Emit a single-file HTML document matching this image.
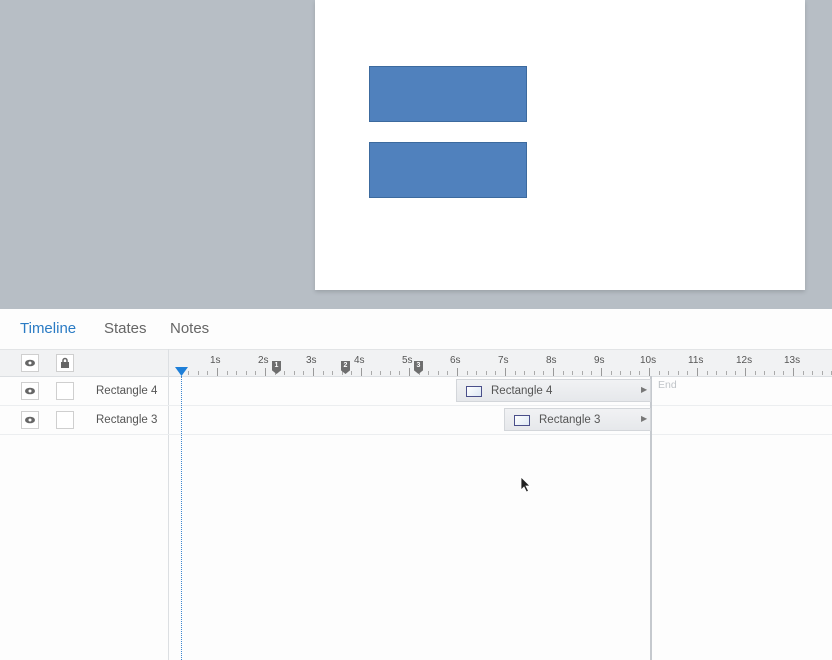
<!DOCTYPE html>
<html><head><style>
*{margin:0;padding:0;box-sizing:border-box}
body{width:832px;height:660px;position:relative;overflow:hidden;background:#fdfdfd;font-family:"Liberation Sans",sans-serif}
.a{position:absolute}
.lbl{font-size:11px;color:#555}
.tk{position:absolute;top:371px;width:1px;height:4px;background:#aaa}
.mj{top:368px;height:8px;background:#999}
.sec{position:absolute;top:355px;font-size:10px;color:#555}
.ib{position:absolute;width:18px;height:18px;border:1px solid #cfcfcf;background:#fff}
.mk{position:absolute;top:361px;width:9px;height:13px;background:#6e6e6e;clip-path:polygon(0 0,100% 0,100% 72%,50% 100%,0 72%);color:#fff;font-size:7px;text-align:center;line-height:10px;font-weight:bold}
.bar{position:absolute;height:23px;background:linear-gradient(#f1f2f4,#e6e8eb);border:1px solid #d3d6da;font-size:11.5px;color:#555}
</style></head><body>
<div class="a" style="left:0;top:0;width:832px;height:309px;background:#b7bec5"></div>
<div class="a" style="left:315px;top:0;width:490px;height:290px;background:#fff;box-shadow:0 2px 4px rgba(0,0,0,.15)"></div>
<div class="a" style="left:369px;top:66px;width:158px;height:56px;background:#5081bd;border:1px solid #3c6a9e"></div>
<div class="a" style="left:369px;top:142px;width:158px;height:56px;background:#5081bd;border:1px solid #3c6a9e"></div>

<div class="a" style="left:20px;top:320px;font-size:15px;color:#2a7bc4">Timeline</div>
<div class="a" style="left:104px;top:320px;font-size:15px;color:#666">States</div>
<div class="a" style="left:170px;top:320px;font-size:15px;color:#666">Notes</div>

<div class="a" style="left:0;top:349px;width:832px;height:28px;background:#f1f2f3;border-top:1px solid #e2e4e6;border-bottom:1px solid #dcdfe2"></div>
<div class="a" style="left:168px;top:349px;width:1px;height:311px;background:#dcdfe2"></div>
<div class="a" style="left:0;top:405px;width:832px;height:1px;background:#eceef0"></div>
<div class="a" style="left:0;top:434px;width:832px;height:1px;background:#eceef0"></div>

<div class="ib" style="left:21px;top:354px"></div>
<div class="ib" style="left:56px;top:354px"></div>
<div class="ib" style="left:21px;top:382px"></div>
<div class="ib" style="left:56px;top:382px"></div>
<div class="ib" style="left:21px;top:411px"></div>
<div class="ib" style="left:56px;top:411px"></div>
<svg class="a" style="left:24px;top:358px" width="12" height="10"><ellipse cx="6" cy="5" rx="5" ry="3.3" fill="#666"/><circle cx="6" cy="5" r="1.5" fill="#fff"/></svg>
<svg class="a" style="left:24px;top:386px" width="12" height="10"><ellipse cx="6" cy="5" rx="5" ry="3.3" fill="#666"/><circle cx="6" cy="5" r="1.5" fill="#fff"/></svg>
<svg class="a" style="left:24px;top:415px" width="12" height="10"><ellipse cx="6" cy="5" rx="5" ry="3.3" fill="#666"/><circle cx="6" cy="5" r="1.5" fill="#fff"/></svg>
<svg class="a" style="left:59px;top:357px" width="12" height="12"><path d="M4 5V3.5a2 2 0 0 1 4 0V5" stroke="#666" stroke-width="1.5" fill="none"/><rect x="2" y="5" width="8" height="6" fill="#666"/></svg>
<div class="a lbl" style="left:96px;top:384px;font-size:11.5px;line-height:14px">Rectangle 4</div>
<div class="a lbl" style="left:96px;top:413px;font-size:11.5px;line-height:14px">Rectangle 3</div>

<div id="ticks"></div>
<div class="sec" style="left:210px">1s</div><div class="sec" style="left:258px">2s</div><div class="sec" style="left:306px">3s</div><div class="sec" style="left:354px">4s</div><div class="sec" style="left:402px">5s</div><div class="sec" style="left:450px">6s</div><div class="sec" style="left:498px">7s</div><div class="sec" style="left:546px">8s</div><div class="sec" style="left:594px">9s</div><div class="sec" style="left:640px">10s</div><div class="sec" style="left:688px">11s</div><div class="sec" style="left:736px">12s</div><div class="sec" style="left:784px">13s</div>
<div class="mk" style="left:272px">1</div><div class="mk" style="left:341px">2</div><div class="mk" style="left:414px">3</div>

<svg class="a" style="left:175px;top:367px" width="13" height="9"><path d="M0 0H13L6.5 9Z" fill="#1e7fd8"/></svg>
<div class="a" style="left:181px;top:376px;width:0;height:284px;border-left:1px dotted #3b86d0"></div>
<div class="a" style="left:650px;top:376px;width:2px;height:284px;background:#c5c9ce"></div>
<div class="a" style="left:658px;top:379px;font-size:10.5px;color:#c0c4c8">End</div>

<div class="bar" style="left:456px;top:379px;width:195px"><div class="a" style="left:9px;top:6px;width:16px;height:11px;border:1px solid #4a4f8a;background:linear-gradient(135deg,#fff,#dde8f4)"></div><span class="a" style="left:34px;top:4px;line-height:14px">Rectangle 4</span><span class="a" style="left:184px;top:5px;font-size:8px;color:#777">&#9654;</span></div>
<div class="bar" style="left:504px;top:408px;width:147px"><div class="a" style="left:9px;top:6px;width:16px;height:11px;border:1px solid #4a4f8a;background:linear-gradient(135deg,#fff,#dde8f4)"></div><span class="a" style="left:34px;top:4px;line-height:14px">Rectangle 3</span><span class="a" style="left:136px;top:5px;font-size:8px;color:#777">&#9654;</span></div>

<svg class="a" style="left:520px;top:476px" width="12" height="18"><path d="M1 1V14L4 11L6.5 16L8.5 15L6 10H10Z" fill="#222" stroke="#fff" stroke-width="0.8"/></svg>
<script>
var h='';for(var i=0;i<72;i++){var x=Math.round(169+i*9.6);if(x<183)continue;h+='<div class="tk'+(i%5==0?' mj':'')+'" style="left:'+x+'px"></div>';}
document.getElementById('ticks').innerHTML=h;
</script>
</body></html>
